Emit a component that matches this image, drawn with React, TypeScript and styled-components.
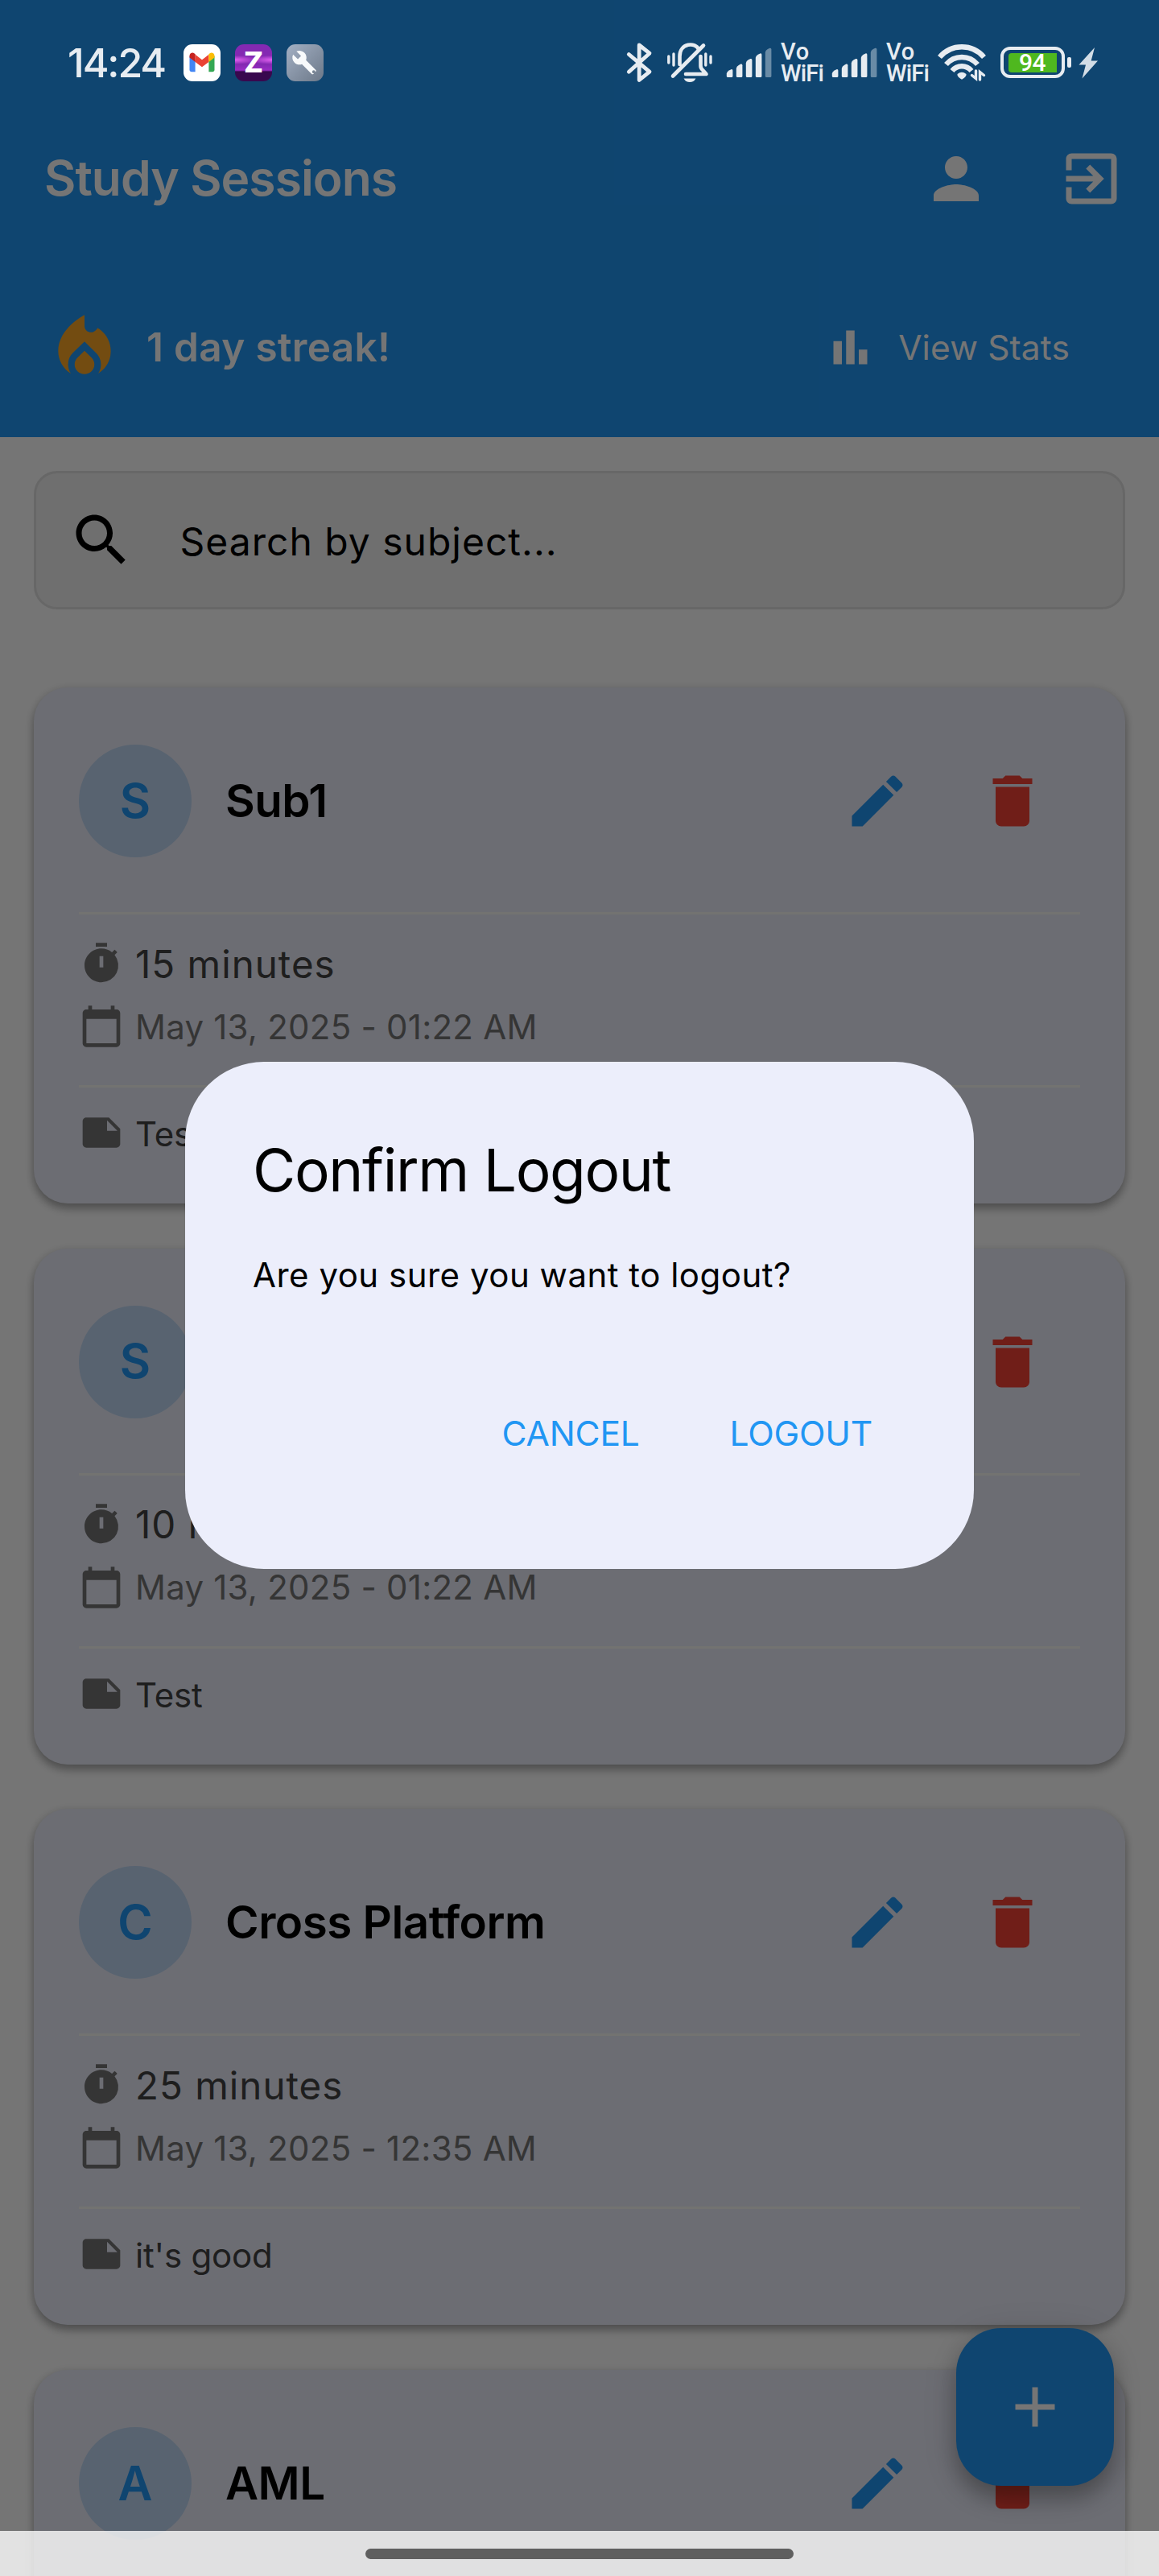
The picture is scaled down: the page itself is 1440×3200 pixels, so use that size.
import React from "react";
import styled, { createGlobalStyle } from "styled-components";

const GlobalStyle = createGlobalStyle`
  *, *::before, *::after { box-sizing: border-box; }
  html, body { margin: 0; padding: 0; background: #ffffff; }
  body { font-family: Inter, "Noto Sans", sans-serif; -webkit-font-smoothing: antialiased; }
  button { border: 0; padding: 0; margin: 0; background: none; font: inherit; color: inherit; }
`;

/* ---------- primitives ---------- */

const Text = styled.span<{
  $size: number;
  $weight?: number;
  $color?: string;
  $track?: number;
  $line?: number;
}>`
  display: block;
  white-space: nowrap;
  font-size: ${(p) => p.$size}px;
  font-weight: ${(p) => p.$weight ?? 400};
  color: ${(p) => p.$color ?? "inherit"};
  letter-spacing: ${(p) => p.$track ?? 0}px;
  line-height: ${(p) => (p.$line ? `${p.$line}px` : "1.2")};
`;

const Glyph = styled.svg<{ $size: number }>`
  display: block;
  flex: none;
  width: ${(p) => p.$size}px;
  height: ${(p) => p.$size}px;
  fill: currentColor;
`;

const PATHS = {
  person:
    "M12 12c2.21 0 4-1.79 4-4s-1.79-4-4-4-4 1.79-4 4 1.79 4 4 4zm0 2c-2.67 0-8 1.34-8 4v2h16v-2c0-2.66-5.33-4-8-4z",
  exit:
    "M10.09 15.59L11.5 17l5-5-5-5-1.41 1.41L12.67 11H3v2h9.67l-2.58 2.59zM19 3H5c-1.11 0-2 .9-2 2v4h2V5h14v14H5v-4H3v4c0 1.1.89 2 2 2h14c1.1 0 2-.9 2-2V5c0-1.1-.9-2-2-2z",
  fire:
    "M12 12.9l-2.13 2.09C9.31 15.55 9 16.28 9 17.06 9 18.68 10.35 20 12 20s3-1.32 3-2.94c0-.78-.31-1.52-.87-2.07L12 12.9zM16 6l-.44.55C14.38 8.02 12 7.19 12 5.3V2S4 6 4 13c0 2.92 1.56 5.47 3.89 6.86-.56-.79-.89-1.76-.89-2.8 0-1.32.52-2.56 1.47-3.5L12 10.1l3.53 3.47c.95.93 1.47 2.17 1.47 3.5 0 1.02-.31 1.96-.85 2.75 1.89-1.15 3.29-3.06 3.71-5.3.66-3.55-1.07-6.9-3.86-8.52z",
  chart: "M4 9h4v11H4zM16 13h4v7h-4zM10 4h4v16h-4z",
  search:
    "M15.5 14h-.79l-.28-.27C15.41 12.59 16 11.11 16 9.5 16 5.91 13.09 3 9.5 3S3 5.91 3 9.5 5.91 16 9.5 16c1.61 0 3.09-.59 4.23-1.57l.27.28v.79l5 4.99L20.49 19l-4.99-5zm-6 0C7.01 14 5 11.99 5 9.5S7.01 5 9.5 5 14 7.01 14 9.5 11.99 14 9.5 14z",
  edit:
    "M3 17.25V21h3.75L17.81 9.94l-3.75-3.75L3 17.25zM20.71 7.04c.39-.39.39-1.02 0-1.41l-2.34-2.34c-.39-.39-1.02-.39-1.41 0l-1.83 1.83 3.75 3.75 1.83-1.83z",
  trash: "M6 19c0 1.1.9 2 2 2h8c1.1 0 2-.9 2-2V7H6v12zM19 4h-3.5l-1-1h-5l-1 1H5v2h14V4z",
  timer:
    "M9 1h6v2H9zM19.03 7.39l1.42-1.42c-.43-.51-.9-.99-1.41-1.41l-1.42 1.42A8.96 8.96 0 0 0 12 4c-4.97 0-9 4.03-9 9s4.02 9 9 9a8.994 8.994 0 0 0 7.03-14.61zM13 14h-2V8h2v6z",
  calendar:
    "M20 3h-1V1h-2v2H7V1H5v2H4c-1.1 0-2 .9-2 2v16c0 1.1.9 2 2 2h16c1.1 0 2-.9 2-2V5c0-1.1-.9-2-2-2zm0 18H4V8h16v13z",
  note:
    "M22 10l-6-6H4c-1.1 0-2 .9-2 2v12.01c0 1.1.9 1.99 2 1.99l16-.01c1.1 0 2-.89 2-1.99v-8zm-7-4.5l5.5 5.5H15V5.5z",
  plus: "M19 13h-6v6h-2v-6H5v-2h6V5h2v6h6v2z",
  wrench:
    "M22.7 19l-9.1-9.1c.9-2.3.4-5-1.5-6.9-2-2-5-2.4-7.4-1.3L9 6 6 9 1.6 4.7C.4 7.1.9 10.1 2.9 12.1c1.9 1.9 4.6 2.4 6.9 1.5l9.1 9.1c.4.4 1 .4 1.4 0l2.3-2.3c.5-.4.5-1.1.1-1.4z",
};

const Icon = ({ name, size }: { name: keyof typeof PATHS; size: number }) => (
  <Glyph $size={size} viewBox="0 0 24 24">
    <path d={PATHS[name]} />
  </Glyph>
);

/* ---------- screen ---------- */

const Screen = styled.div`
  position: relative;
  width: 1440px;
  height: 3200px;
  overflow: hidden;
  background: #ffffff;
`;

const Header = styled.header`
  height: 543px;
  padding-top: 123px;
  background: #2196f3;
  color: #ffffff;
`;

const AppBar = styled.div`
  display: flex;
  align-items: center;
  justify-content: space-between;
  height: 197px;
  padding-left: 55px;
`;

const IconButton = styled.button<{ $color?: string }>`
  display: grid;
  place-items: center;
  width: 168px;
  height: 168px;
  color: ${(p) => p.$color ?? "inherit"};
`;

const Row = styled.div`
  display: flex;
  align-items: center;
`;

const StreakBar = styled.div`
  display: flex;
  align-items: center;
  justify-content: space-between;
  height: 223px;
  padding: 0 111px 0 56px;
`;

const Streak = styled(Row)`
  gap: 28px;
`;

const FireTone = styled.span`
  color: #fba726;
`;

const StatsButton = styled.button`
  display: flex;
  align-items: center;
  gap: 28px;
`;

const Main = styled.main`
  padding: 42px 42px 0;
`;

const SearchField = styled.div`
  display: flex;
  align-items: center;
  gap: 56px;
  height: 172px;
  margin-bottom: 97px;
  padding-left: 38.5px;
  border: 3.5px solid #e0e0e0;
  border-radius: 29px;
  background: #f2f2f2;
  color: #000000;
`;

const SearchHint = styled(Text)`
  padding-top: 4px;
`;

const CardList = styled.div`
  display: flex;
  flex-direction: column;
  gap: 55.7px;
`;

const Card = styled.article`
  flex: none;
  height: 641px;
  padding: 57px 56px 0;
  border-radius: 42px;
  background: #ebedfa;
  box-shadow: 0 7px 11px rgba(0, 0, 0, 0.26), 0 2px 12px rgba(0, 0, 0, 0.14);
`;

const CardHeader = styled.div`
  display: flex;
  align-items: center;
  height: 168px;
  margin-bottom: 54px;
`;

const Avatar = styled.div`
  display: grid;
  place-items: center;
  width: 140px;
  height: 140px;
  margin-right: 42px;
  border-radius: 50%;
  background: #bfd8f5;
`;

const Grow = styled.div`
  flex: 1;
`;

const Divider = styled.hr`
  height: 3px;
  margin: 0;
  border: 0;
  background: #fafaf6;
`;

const Details = styled.div`
  display: flex;
  flex-direction: column;
  gap: 22px;
  height: 212px;
  padding-top: 33px;
`;

const InfoRow = styled.div`
  display: flex;
  align-items: center;
  gap: 14px;
  height: 56px;
  color: #757575;
`;

const InfoText = styled(Text)`
  padding-top: 2px;
`;

const NoteRow = styled.div`
  display: flex;
  gap: 14px;
  padding-top: 28px;
  color: #757575;
`;

const Fab = styled.button`
  position: absolute;
  right: 56px;
  bottom: 112px;
  display: grid;
  place-items: center;
  width: 196px;
  height: 196px;
  border-radius: 56px;
  background: #2196f3;
  color: #ffffff;
  box-shadow: 0 16px 26px rgba(0, 0, 0, 0.24), 0 8px 44px rgba(0, 0, 0, 0.14);
`;

/* ---------- dialog ---------- */

const Scrim = styled.div`
  position: absolute;
  inset: 0;
  display: flex;
  justify-content: center;
  align-items: flex-start;
  padding-top: 1318.5px;
  background: rgba(0, 0, 0, 0.54);
`;

const Dialog = styled.section`
  display: flex;
  flex-direction: column;
  width: 980px;
  height: 630px;
  padding: 84px 84px 0;
  border-radius: 98px;
  background: #eceefb;
  color: #000000;
`;

const DialogBody = styled.div`
  padding-top: 43px;
`;

const DialogActions = styled.div`
  display: flex;
  justify-content: flex-end;
  gap: 28px;
  margin-top: 92px;
`;

const TextButton = styled.button`
  display: grid;
  place-items: center;
  height: 140px;
  padding: 0 42px;
  color: #2196f3;
`;

/* ---------- system bars ---------- */

const StatusBar = styled.div`
  position: absolute;
  inset: 0 0 auto 0;
  display: flex;
  align-items: center;
  justify-content: space-between;
  height: 155px;
  padding: 0 76px 0 84px;
  color: #e7ecf1;
`;

const StatusGroup = styled.div`
  display: flex;
  align-items: center;
`;

const Clock = styled(Text)`
  width: 144px;
`;

const AppTile = styled.div<{ $bg: string }>`
  display: grid;
  place-items: center;
  width: 46px;
  height: 46px;
  margin-right: 18px;
  border-radius: 11px;
  overflow: hidden;
  background: ${(p) => p.$bg};
  color: #ffffff;
`;

const StatusSvg = styled.svg<{ $w: number; $gap: number }>`
  display: block;
  flex: none;
  width: ${(p) => p.$w}px;
  height: 50px;
  margin-right: ${(p) => p.$gap}px;
  overflow: visible;
`;

const VoWifi = styled.div<{ $gap: number }>`
  width: 52px;
  margin-right: ${(p) => p.$gap}px;
  font-family: Roboto, sans-serif;
  font-weight: 500;
  font-size: 29px;
  line-height: 27px;
  white-space: nowrap;
`;

const VoWord = styled.div`
  letter-spacing: 0.8px;
`;

const WifiWord = styled.div`
  letter-spacing: -0.8px;
`;

const Battery = styled.div`
  display: flex;
  align-items: center;
  gap: 3px;
  margin-right: 9px;
`;

const BatteryShell = styled.div`
  width: 80px;
  height: 39px;
  padding: 3.5px 5.5px;
  border: 4px solid currentColor;
  border-radius: 12px;
`;

const BatteryFill = styled.div`
  display: grid;
  place-items: center;
  width: 60px;
  height: 24px;
  border-radius: 4px 0 0 4px;
  background: #4fb81f;
  color: #ffffff;
  font: 500 30px/24px Roboto, sans-serif;
  letter-spacing: -0.5px;
`;

const BatteryCap = styled.div`
  width: 5px;
  height: 13px;
  border-radius: 2px;
  background: currentColor;
`;

const NavBar = styled.div`
  position: absolute;
  inset: auto 0 0 0;
  display: flex;
  justify-content: center;
  height: 56px;
  padding-top: 22px;
  background: rgba(255, 255, 255, 0.79);
`;

const NavHandle = styled.div`
  width: 532px;
  height: 13px;
  border-radius: 7px;
  background: #5f5f5f;
`;

/* ---------- status drawings ---------- */

const GmailMark = () => (
  <svg width="46" height="46" viewBox="0 0 46 46">
    <path d="M7.5 14.5v17.3c0 1.4 1.1 2.5 2.5 2.5h4.6V19.6z" fill="#4285f4" />
    <path d="M38.5 14.5v17.3c0 1.4-1.1 2.5-2.5 2.5h-4.6V19.6z" fill="#34a853" />
    <path d="M14.6 12.8L23 19.2l8.4-6.4v9.1L23 28.2l-8.4-6.3z" fill="#ea4335" />
    <path d="M7.5 14.5c0-3.4 3.6-5 6.1-3.1l1 .8v9.7l-7.1-5.3z" fill="#c5221f" />
    <path d="M38.5 14.5c0-3.4-3.6-5-6.1-3.1l-1 .8v9.7l7.1-5.3z" fill="#fbbc04" />
  </svg>
);

const Signal = ({ gap }: { gap: number }) => (
  <StatusSvg $w={57} $gap={gap} viewBox="0 0 57 50" fill="currentColor">
    {[0, 1, 2, 3, 4].map((i) => {
      const x = 0.8 + i * 12;
      const top = 33 - i * 6.6;
      return (
        <path
          key={i}
          opacity={i === 4 ? 0.42 : 1}
          d={`M${x} ${top + 5.5}q.3-2.4 3-4l2.6-1.3q2-.5 2 1.6V41.5q0 1.5-1.5 1.5h-4.6q-1.5 0-1.5-1.5z`}
        />
      );
    })}
  </StatusSvg>
);

const Network = ({ gap }: { gap: number }) => (
  <VoWifi $gap={gap}>
    <VoWord>Vo</VoWord>
    <WifiWord>WiFi</WifiWord>
  </VoWifi>
);

const SystemStatus = () => (
  <StatusBar>
    <StatusGroup>
      <Clock $size={50} $weight={500} $track={-2.1}>14:24</Clock>
      <AppTile $bg="#ffffff">
        <GmailMark />
      </AppTile>
      <AppTile $bg="radial-gradient(ellipse 60% 12% at 0 42%, #e060f0 0, transparent 100%), radial-gradient(ellipse 60% 12% at 100% 42%, #e060f0 0, transparent 100%), linear-gradient(#8429b2 0 55%, #9a2cc4 70%, #38084e 74% 100%)">
        <Text $size={35.5} $weight={800} $line={46}>Z</Text>
      </AppTile>
      <AppTile $bg="linear-gradient(135deg, #a3b0c4, #6c7888)">
        <svg width="46" height="46" viewBox="0 0 46 46">
          <path transform="translate(6 6.5) scale(1.34)" d={PATHS.wrench} fill="#f8fafb" />
          <circle cx="33.8" cy="34.2" r="1.9" fill="#768292" />
        </svg>
      </AppTile>
    </StatusGroup>
    <StatusGroup>
      <StatusSvg $w={36} $gap={16} viewBox="0 0 36 50" fill="none" stroke="currentColor" strokeWidth="4.8" strokeLinejoin="round" strokeLinecap="round">
        <path d="M5.3 14.5L31 36.2 18.2 46.5V3L31 13.2 5.3 36.2" />
      </StatusSvg>
      <StatusSvg $w={58} $gap={16} viewBox="0 0 58 50" fill="none" stroke="currentColor" strokeWidth="4.6" strokeLinecap="round" strokeLinejoin="round">
        <path d="M16.5 27V17C16.5 0 36.5-1 40 8.5M8 41.5L46 3.5" />
        <path d="M42.5 17v12q0 3 3 5.500l4 4.500H24" />
        <path d="M21.5 44.500h15q-2.500 4.600-7.500 4.600t-7.500-4.600z" fill="currentColor" stroke="none" />
        <path d="M2.800 17v8M9 14v14M48.800 14v14M55 17v8" strokeWidth="3.4" />
      </StatusSvg>
      <Signal gap={11} />
      <Network gap={11} />
      <Signal gap={11} />
      <Network gap={12} />
      <StatusSvg $w={60} $gap={18} viewBox="0 -2.5 60 50" fill="none" stroke="currentColor" strokeWidth="6.4">
        <path d="M2.5 15.5A36 36 0 0 1 57.5 15.5M10.5 24.5A25.5 25.5 0 0 1 49.5 24.5M18 32.5A15.5 15.5 0 0 1 42 32.5" />
        <path d="M24.5 36.5q5.5-4.500 11 0 .8 3-5.500 6.800-6.300-3.800-5.500-6.800z" fill="currentColor" stroke="none" />
        <path d="M47.5 32.5v9.500l-5-4M52.5 43.5V34l5 4" strokeWidth="3.4" strokeLinecap="round" />
      </StatusSvg>
      <Battery>
        <BatteryShell>
          <BatteryFill>94</BatteryFill>
        </BatteryShell>
        <BatteryCap />
      </Battery>
      <StatusSvg $w={24} $gap={0} viewBox="0 0 24 50" fill="#d3dde6">
        <path d="M20 6L.5 27.500h8.500L4.500 44.500 24 22.500h-8.300z" />
      </StatusSvg>
    </StatusGroup>
  </StatusBar>
);

/* ---------- sessions ---------- */

type Log = { minutes: number; when: string; note: string };
type Session = { id: number; subject: string; log?: Log };

const SESSIONS: Session[] = [
  { id: 1, subject: "Sub1", log: { minutes: 15, when: "May 13, 2025 - 01:22 AM", note: "Test" } },
  { id: 2, subject: "Sub1", log: { minutes: 10, when: "May 13, 2025 - 01:22 AM", note: "Test" } },
  { id: 3, subject: "Cross Platform", log: { minutes: 25, when: "May 13, 2025 - 12:35 AM", note: "it's good" } },
  { id: 4, subject: "AML" },
];

const SessionLog = ({ minutes, when, note }: Log) => (
  <>
    <Divider />
    <Details>
      <InfoRow>
        <Icon name="timer" size={56} />
        <Text $size={47.5} $color="#424242" $track={1}>{minutes} minutes</Text>
      </InfoRow>
      <InfoRow>
        <Icon name="calendar" size={56} />
        <InfoText $size={42} $track={0.24}>{when}</InfoText>
      </InfoRow>
    </Details>
    <Divider />
    <NoteRow>
      <Icon name="note" size={56} />
      <Text $size={42} $color="#424242" $track={-0.2} $line={60}>{note}</Text>
    </NoteRow>
  </>
);

const SessionCard = ({ subject, log }: Session) => (
  <Card>
    <CardHeader>
      <Avatar>
        <Text $size={59} $weight={600} $color="#2196f3">{subject[0]}</Text>
      </Avatar>
      <Text $size={56.5} $weight={620} $color="#000000" $track={-0.5}>{subject}</Text>
      <Grow />
      <IconButton $color="#2196f3">
        <Icon name="edit" size={84} />
      </IconButton>
      <IconButton $color="#f44336">
        <Icon name="trash" size={84} />
      </IconButton>
    </CardHeader>
    {log && <SessionLog {...log} />}
  </Card>
);

export default function App() {
  return (
    <Screen>
      <GlobalStyle />
      <Header>
        <AppBar>
          <Text $size={60.5} $weight={600} $track={-0.95}>Study Sessions</Text>
          <Row>
            <IconButton>
              <Icon name="person" size={84} />
            </IconButton>
            <IconButton>
              <Icon name="exit" size={84} />
            </IconButton>
          </Row>
        </AppBar>
        <StreakBar>
          <Streak>
            <FireTone>
              <Icon name="fire" size={98} />
            </FireTone>
            <Text $size={49.5} $weight={600} $track={0.33}>1 day streak!</Text>
          </Streak>
          <StatsButton>
            <Icon name="chart" size={63} />
            <Text $size={42.5} $track={0.13}>View Stats</Text>
          </StatsButton>
        </StreakBar>
      </Header>
      <Main>
        <SearchField>
          <Icon name="search" size={84} />
          <SearchHint $size={48} $track={1}>Search by subject...</SearchHint>
        </SearchField>
        <CardList>
          {SESSIONS.map((s) => (
            <SessionCard key={s.id} {...s} />
          ))}
        </CardList>
      </Main>
      <Fab>
        <Icon name="plus" size={84} />
      </Fab>
      <Scrim>
        <Dialog>
          <Text $size={73} $track={-1.4} $line={102}>Confirm Logout</Text>
          <DialogBody>
            <Text $size={42} $track={0.5} $line={71}>Are you sure you want to logout?</Text>
          </DialogBody>
          <DialogActions>
            <TextButton>
              <Text $size={42.5} $track={-0.2}>CANCEL</Text>
            </TextButton>
            <TextButton>
              <Text $size={42.5} $track={-0.2}>LOGOUT</Text>
            </TextButton>
          </DialogActions>
        </Dialog>
      </Scrim>
      <SystemStatus />
      <NavBar>
        <NavHandle />
      </NavBar>
    </Screen>
  );
}
